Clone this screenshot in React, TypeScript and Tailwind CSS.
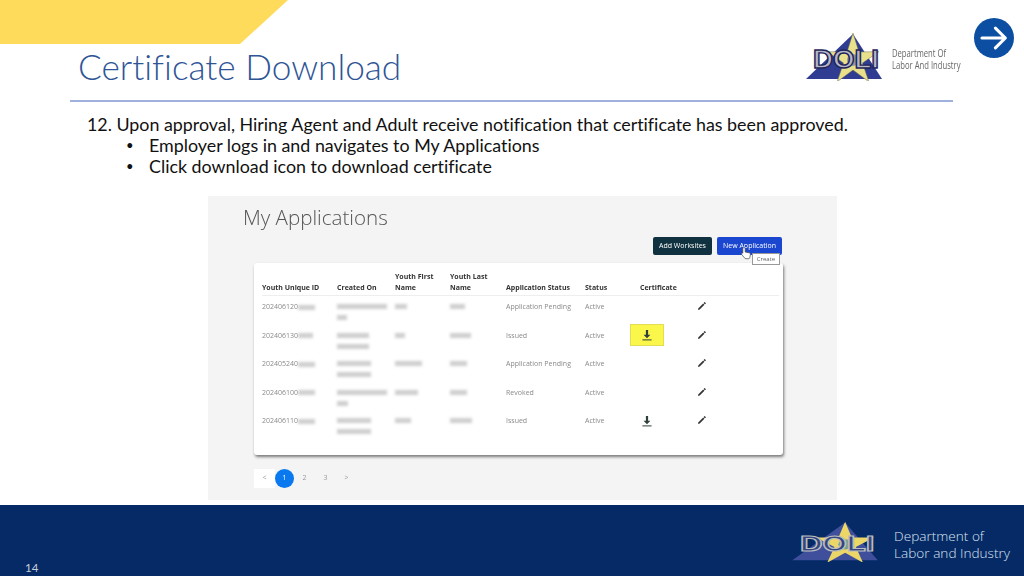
const star = (cx: number, cy: number, R: number, r: number) =>
  Array.from({ length: 10 }, (_, i) => {
    const a = -Math.PI / 2 + (i * Math.PI) / 5;
    const d = i % 2 ? r : R;
    return `${(cx + d * Math.cos(a)).toFixed(1)},${(cy + d * Math.sin(a)).toFixed(1)}`;
  }).join(" ");

function Logo({ dark, className }: { dark?: boolean; className: string }) {
  return (
    <svg viewBox="0 0 80 50" preserveAspectRatio="none" className={className}>
      <polygon points="2,48 78,48 49,3" fill={dark ? "#3f4f9c" : "#2f3c92"} />
      <polygon points={star(49, 29, 27, 10)} fill={dark ? "#ecd667" : "#e9e08c"} stroke={dark ? "none" : "#6f7050"} strokeWidth="0.5" />
      <circle cx="49" cy="29" r="6" fill={dark ? "#77a08a" : "#8e9aa0"} />
      <text x="9" y="37" fontFamily="Liberation Sans, sans-serif" fontWeight="700" fontSize="26" textLength="66" lengthAdjust="spacingAndGlyphs" fill={dark ? "#34447f" : "#b5b5c8"} stroke={dark ? "#b9bdbd" : "#1f2558"} strokeWidth="1.4">
        DOLI
      </text>
    </svg>
  );
}

function DownloadIcon() {
  return (
    <svg viewBox="0 0 14 14" className="w-[14px] h-[14px]">
      <path d="M5.9 2h2.2v4.7h2.3L7 10.2 3.6 6.7h2.3z" fill="#2f3f3c" />
      <rect x="2.4" y="11.4" width="9.2" height="1" fill="#2f3f3c" />
    </svg>
  );
}

function EditIcon() {
  return (
    <svg viewBox="0 0 12 12" className="w-[10px] h-[10px] -mt-[1px]">
      <path d="M1.2 10.8l.5-2 5.7-5.700 1.500 1.500-5.700 5.700z" fill="#333" />
      <path d="M8 2.500l1.200-1.200 1.500 1.500-1.200 1.200z" fill="#222" />
    </svg>
  );
}

function Smudge({ w, mt = 0, h = 5 }: { w: number; mt?: number; h?: number }) {
  return <div className="bg-[#c2c2c2] blur-[1.6px] opacity-80" style={{ width: w, height: h, marginTop: mt }} />;
}

const rows = [
  { id: "202406120", tail: 17, c1: 50, c2: 10, f: 12, l: 15, app: "Application Pending", dl: 0 },
  { id: "202406130", tail: 15, c1: 32, c2: 32, f: 10, l: 21, app: "Issued", dl: 2 },
  { id: "202405240", tail: 17, c1: 34, c2: 34, f: 27, l: 17, app: "Application Pending", dl: 0 },
  { id: "202406100", tail: 17, c1: 50, c2: 11, f: 23, l: 17, app: "Revoked", dl: 0 },
  { id: "202406110", tail: 17, c1: 34, c2: 34, f: 16, l: 22, app: "Issued", dl: 1 },
];

const headers = ["Youth Unique ID", "Created On", "Youth First\nName", "Youth Last\nName", "Application Status", "Status", "Certificate"];

const gridCols = "grid grid-cols-[75px_58px_55px_56px_79px_55px_57px_1fr]";

export default function App() {
  return (
    <div className="w-[1024px] h-[576px] bg-white overflow-hidden flex flex-col font-['Lato','Noto_Sans',sans-serif]">
      <header className="h-[100px] flex justify-between shrink-0">
        <div>
          <div className="w-[288px] h-[44px] bg-[#ffdb5c] [clip-path:polygon(0_0,100%_0,240px_100%,0_100%)]" />
          <h1 className="ml-[78px] text-[35.2px] leading-[44px] font-light text-[#2f5597] [font-variant-ligatures:none]">Certificate Download</h1>
        </div>
        <div className="flex">
          <Logo className="w-[80px] h-[50px] mt-[31px]" />
          <div className="ml-[8px] mt-[47px] w-[70px] text-[10.5px] leading-[12px] text-[#666] whitespace-nowrap font-['Open_Sans',sans-serif] origin-left scale-x-[0.73]">
            Department Of
            <br />
            Labor And Industry
          </div>
          <div className="ml-[12px] mr-[10px] mt-[18px] w-[40px] h-[40px] rounded-full bg-[#0b4ea2] flex items-center justify-center">
            <svg viewBox="0 0 24 24" className="w-[34px] h-[34px]" fill="none" stroke="white" strokeWidth="2.2" strokeLinecap="round" strokeLinejoin="round">
              <path d="M3.5 12h16M13 5l7 7-7 7" />
            </svg>
          </div>
        </div>
      </header>
      <div className="h-[2px] ml-[70px] w-[883px] bg-[#9fb1dc] shrink-0" />

      <main className="flex-1 min-h-0">
        <div className="pl-[87px] pt-[12px] text-[17.85px] leading-[21px] text-[#111] [font-variant-ligatures:none]">
          <p>12. Upon approval, Hiring Agent and Adult receive notification that certificate has been approved.</p>
          <ul>
            {["Employer logs in and navigates to My Applications", "Click download icon to download certificate"].map((t) => (
              <li key={t} className="flex">
                <span className="ml-[39px] w-[23px] text-[13px]">•</span>
                {t}
              </li>
            ))}
          </ul>
        </div>

        <section className="ml-[208px] mt-[19px] w-[629px] h-[304px] bg-[#f4f4f4] blur-[0.4px] font-['Open_Sans',sans-serif]">
          <h2 className="pl-[35px] pt-[6px] text-[20.6px] leading-[30px] font-light text-[#555]">My Applications</h2>
          <div className="flex justify-end gap-[5px] pr-[55px] mt-[5px]">
            <button className="block w-[59px] h-[18px] rounded-[2px] bg-[#10313f] text-white text-[7px] leading-[18px] text-center">Add Worksites</button>
            <div className="relative">
              <button className="block w-[65px] h-[18px] rounded-[2px] bg-[#1a46d0] text-white text-[7px] leading-[18px] text-center">New Application</button>
              <svg viewBox="0 0 12 14" className="absolute left-[23px] top-[9px] w-[12px] h-[14px]">
                <path d="M4 1.5c.8 0 1.2.5 1.2 1.2V6l4 .8c.8.2 1.3.7 1.2 1.5l-.6 3.2c-.1.8-.6 1.2-1.4 1.2H6c-.7 0-1.2-.3-1.6-.9L1.5 8.200c-.5-.8.5-1.700 1.300-1L2.800 2.700c0-.7.5-1.200 1.200-1.200z" fill="white" stroke="#444" strokeWidth="0.7" />
              </svg>
              <div className="absolute left-[35px] top-[16px] w-[28px] h-[12px] bg-white border border-[#999] text-[6px] leading-[10px] text-center text-[#666]">Create</div>
            </div>
          </div>

          <div className="ml-[46px] mt-[8px] w-[529px] h-[192px] bg-white rounded-[3px] shadow-[1px_2px_3px_rgba(0,0,0,0.5)] pl-[8px] pr-[4px]">
            <div className={`${gridCols} h-[33px] items-end pb-[2px] border-b border-[#eeeeee] text-[7px] leading-[11px] font-bold text-[#333]`}>
              {headers.map((h) => (
                <div key={h} className="whitespace-pre">{h}</div>
              ))}
            </div>
            {rows.map((r) => (
              <div key={r.id} className={`${gridCols} h-[28.5px] items-start pt-[6px] text-[7px] leading-[10px] text-[#8a8a8a]`}>
                <div className="flex items-center">
                  {r.id}
                  <Smudge w={r.tail} />
                </div>
                <div>
                  <Smudge w={r.c1} mt={2} />
                  <Smudge w={r.c2} mt={6} />
                </div>
                <Smudge w={r.f} mt={2} />
                <Smudge w={r.l} mt={2} />
                <div>{r.app}</div>
                <div>Active</div>
                <div className="flex">
                  {r.dl === 2 && (
                    <div className="w-[34px] h-[22px] -ml-[10px] -mt-[7px] bg-[#fbf74a] border border-[#e3dc55] flex items-center justify-center">
                      <DownloadIcon />
                    </div>
                  )}
                  {r.dl === 1 && (
                    <div className="w-[14px] -mt-[2px]">
                      <DownloadIcon />
                    </div>
                  )}
                </div>
                <EditIcon />
              </div>
            ))}
          </div>

          <nav className="ml-[46px] mt-[14px] flex items-center text-[7px] text-[#999]">
            <span className="w-[21px] h-[19px] bg-white flex items-center justify-center">&lt;</span>
            <span className="w-[19px] h-[19px] rounded-full bg-[#0a78ee] text-white flex items-center justify-center">1</span>
            <span className="w-[21px] text-center">2</span>
            <span className="w-[21px] text-center">3</span>
            <span className="w-[21px] text-center">&gt;</span>
          </nav>
        </section>
      </main>

      <footer className="h-[71px] bg-[#052a66] shrink-0 flex justify-between">
        <span className="ml-[25px] mt-[55px] text-[11.5px] leading-[15px] text-[#c8cdd8]">14</span>
        <div className="flex">
          <Logo dark className="w-[90px] h-[42px] mt-[15px]" />
          <div className="ml-[14px] mr-[14px] mt-[22px] text-[13.6px] leading-[17px] text-[#dbe6f2] whitespace-nowrap font-['Open_Sans',sans-serif] font-light">
            Department of
            <br />
            Labor and Industry
          </div>
        </div>
      </footer>
    </div>
  );
}
